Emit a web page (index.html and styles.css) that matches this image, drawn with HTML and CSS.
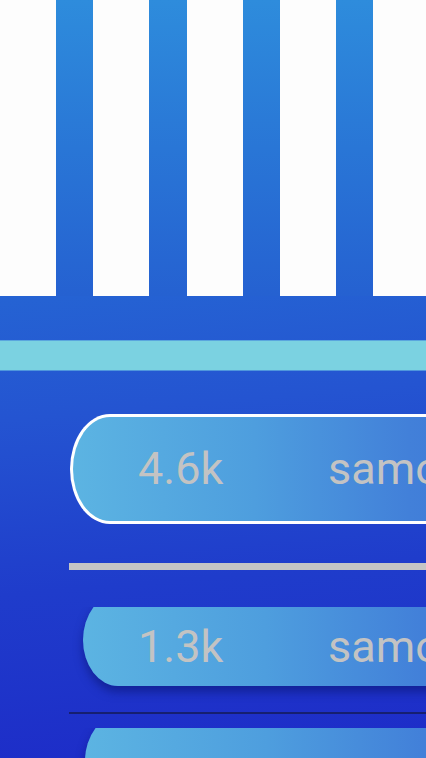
FILE: index.html
```html
<!DOCTYPE html>
<html>
<head>
<meta charset="utf-8">
<link rel="stylesheet" href="styles.css">
</head>
<body>
<div class="page">
  <div class="stripes">
    <div class="stripe"></div>
    <div class="stripe"></div>
    <div class="stripe"></div>
    <div class="stripe"></div>
  </div>
  <div class="panel">
    <div class="band"></div>
    <div class="list">
      <div class="pill pill-active">
        <span class="count">4.6k</span>
        <span class="name">samochód</span>
      </div>
      <div class="sep sep-light"></div>
      <div class="pill pill-clipped">
        <span class="count">1.3k</span>
        <span class="name">samochód</span>
      </div>
      <div class="sep sep-dark"></div>
      <div class="pill pill-clipped pill-third"></div>
    </div>
  </div>
</div>
</body>
</html>
```

FILE: styles.css
```css
html, body {
  margin: 0;
  padding: 0;
  width: 426px;
  height: 758px;
  overflow: hidden;
  background: #fdfdfd;
}

.page {
  width: 426px;
  height: 758px;
  display: flex;
  flex-direction: column;
  font-family: Roboto, "Liberation Sans", sans-serif;
}

.stripes {
  height: 296px;
  flex: none;
  display: flex;
  gap: 56px;
  padding-left: 56px;
  background: #fdfdfd;
}

.stripe {
  width: 37.33px;
  height: 100%;
  background: linear-gradient(180deg, #2e8cdc 0%, #2976d6 50%, #2561d1 100%);
}

.panel {
  flex: 1;
  overflow: hidden;
  padding-top: 45px;
  background: linear-gradient(175deg, #2563d3 0%, #2454d1 25%, #1f3ccb 60%, #1d2bc8 100%);
}

.band {
  height: 29px;
  background: #7bd2e1;
  box-shadow: 0 -1px 0 #5aa6de, 0 1px 0 #4f96dc;
}

.list {
  display: flex;
  flex-direction: column;
  padding-top: 44px;
}

.pill {
  width: 520px;
  flex: none;
  display: grid;
  grid-template-columns: 190px auto;
  align-items: center;
  padding-left: 68px;
  box-sizing: border-box;
  background: linear-gradient(90deg, #5cb4e2 0%, #4e9ede 35%, #4280d9 65%, #3a6dd6 100%);
  color: #c3c3c3;
  font-size: 45px;
  line-height: 1;
  white-space: nowrap;
}

.count, .name {
  display: block;
}

.pill-active {
  margin-left: 70px;
  height: 110px;
  border: 3px solid #ffffff;
  border-right: none;
  border-radius: 40px 0 0 40px / 55px 0 0 55px;
  padding-left: 65px;
  padding-bottom: 2px;
}

.sep {
  margin-left: 69px;
  width: 400px;
}

.sep-light {
  height: 7px;
  background: #c5c5c5;
  margin-top: 39px;
}

.pill-clipped {
  margin-left: 83px;
  height: 92px;
  margin-top: 24px;
  padding-top: 13px;
  padding-left: 55px;
  border-radius: 35px 0 0 35px / 46px 0 0 46px;
  clip-path: inset(13px -40px -40px -40px);
  box-shadow: 0 6px 10px rgba(10, 20, 110, 0.55);
}

.sep-dark {
  height: 2px;
  background: #161f70;
  margin-top: 26px;
}

.pill-third {
  margin-left: 85px;
  margin-top: 1px;
  padding-left: 53px;
}
```
